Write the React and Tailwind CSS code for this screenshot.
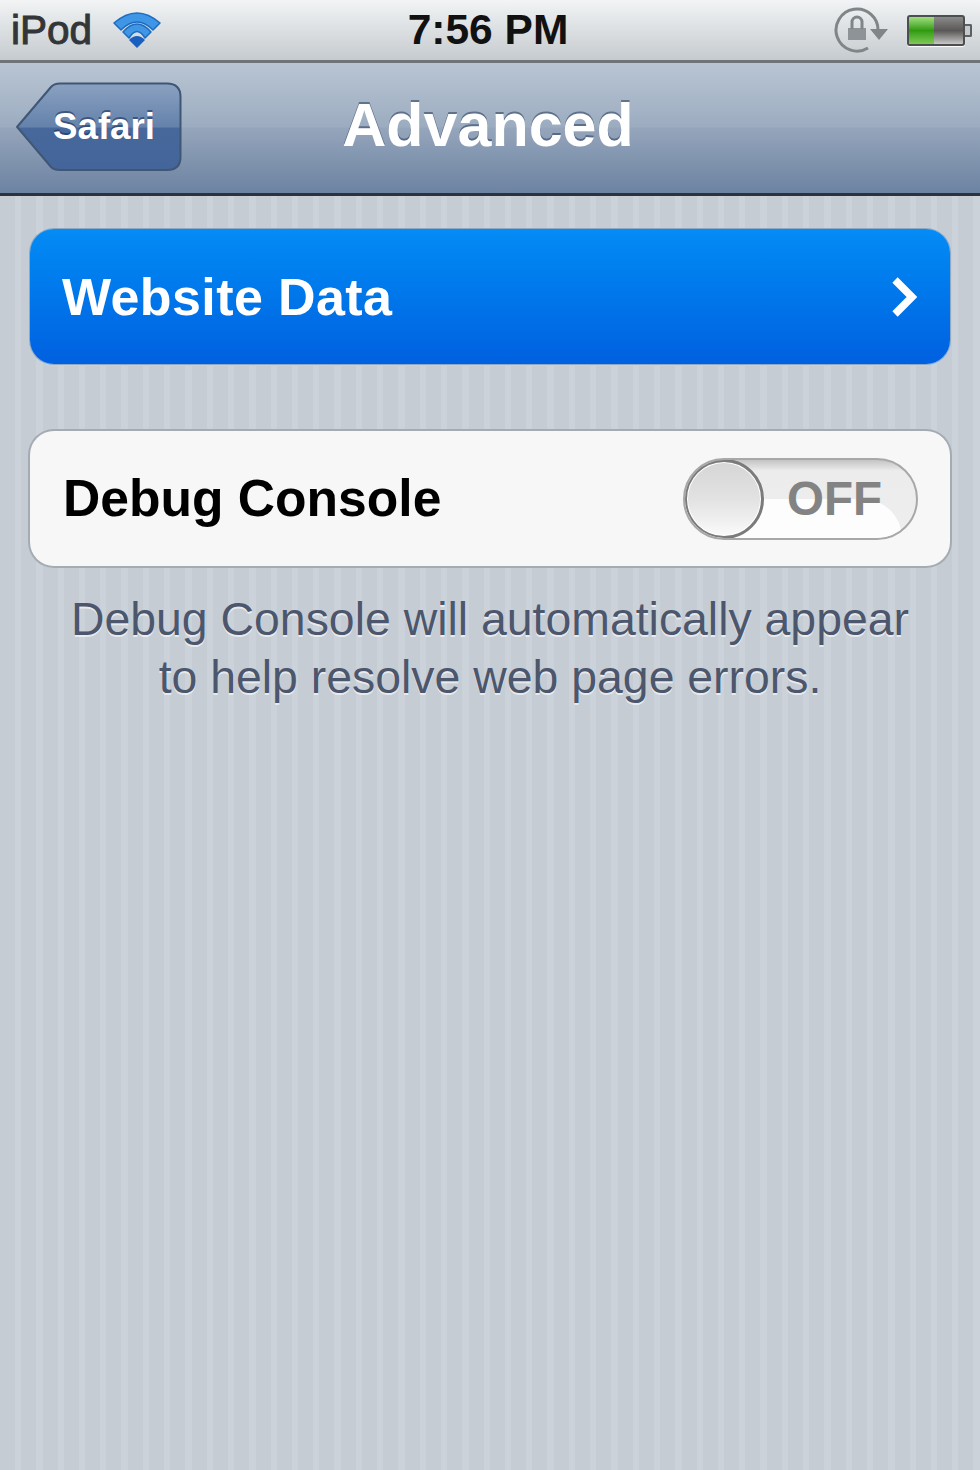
/**
 * iOS Settings - Safari Advanced page
 */

const WifiIcon = () => (
  <svg width="48" height="38" viewBox="0 0 48 38" fill="none">
    <path d="M1 12 Q24 -8 47 12 L40 19 Q24 3 8 19 Z" fill="#3f96e6" stroke="#1c6cc0" strokeWidth="1.5" strokeLinejoin="round" />
    <path d="M10 21 Q24 5 38 21 L32 27 Q24 14 16 27 Z" fill="#3f96e6" stroke="#1c6cc0" strokeWidth="1.5" strokeLinejoin="round" />
    <path d="M24 37 L16 29 Q24 21 32 29 Z" fill="#1a5fc0" />
  </svg>
);

const RotationLockIcon = () => (
  <svg width="54" height="50" viewBox="0 0 54 50" fill="none">
    <path d="M34 43 A21 21 0 1 1 44 26 L44 28" stroke="#808588" strokeWidth="3" />
    <path d="M36 24 H54 L45 35 Z" fill="#808588" />
    <rect x="14" y="23" width="18" height="12" fill="#8e9397" />
    <path d="M18 24 V17 a5 5 0 0 1 10 0 V24" stroke="#808588" strokeWidth="3" />
  </svg>
);

const BatteryIcon = () => (
  <div className="flex items-center">
    <div className="flex h-[31px] w-[58px] overflow-hidden rounded-[3px] border-2 border-[#4b4f52] bg-gradient-to-b from-[#8b8b8b] via-[#5a5856] to-[#c9c9c9] shadow-[0_1px_1px_#fff]">
      <div className="h-full w-[25px] bg-gradient-to-b from-[#9ee07a] via-[#2f9a0c] to-[#7ccb52]" />
    </div>
    <div className="h-[13px] w-[7px] rounded-r-[2px] border-2 border-l-0 border-[#5b6063] bg-[#c5c9cc]" />
  </div>
);

const BackButton = () => (
  <button className="relative flex h-[90px] w-[166px] items-center justify-end pr-[27px]">
    <svg className="absolute inset-0" width="166" height="90" viewBox="0 0 166 90" fill="none">
      <defs>
        <linearGradient id="backFill" x1="0" y1="0" x2="0" y2="1">
          <stop offset="0" stopColor="#8ba1c1" />
          <stop offset="0.5" stopColor="#6482ab" />
          <stop offset="0.52" stopColor="#46689b" />
          <stop offset="1" stopColor="#44659a" />
        </linearGradient>
      </defs>
      <path
        d="M1 45 L35 5 Q38 1.5 44 1.5 H151 Q164.5 1.5 164.5 15 V75 Q164.5 88 151 88 H44 Q38 88 35 85 Z"
        fill="url(#backFill)"
        stroke="#3f5675"
        strokeWidth="2"
      />
    </svg>
    <span className="relative text-[36.7px] font-bold leading-none text-white [text-shadow:0_-2px_0_rgba(30,50,90,0.6)]">
      Safari
    </span>
  </button>
);

const App = () => {
  return (
    <div className="flex h-[1470px] w-[980px] flex-col overflow-hidden font-['Liberation_Sans',Arial,sans-serif] bg-[repeating-linear-gradient(90deg,#c5ccd4_0px,#c5ccd4_15px,#cbd2da_15px,#cbd2da_21.3px)]">
      {/* Status bar */}
      <div className="grid h-[63px] shrink-0 grid-cols-[1fr_auto_1fr] items-center border-b-[3px] border-[#707478] bg-gradient-to-b from-[#f2f4f5] to-[#c6cbcf] pl-[11px] pr-[15px]">
        <div className="flex items-center gap-[21px]">
          <span className="text-[40.5px] leading-none text-[#333638] [-webkit-text-stroke:1px_#333638]">iPod</span>
          <WifiIcon />
        </div>
        <span className="text-[42.5px] font-bold leading-none text-[#111]">7:56 PM</span>
        <div className="-mr-[7px] flex items-center justify-end gap-[19px]">
          <RotationLockIcon />
          <BatteryIcon />
        </div>
      </div>

      {/* Navigation bar */}
      <div className="grid h-[133px] shrink-0 grid-cols-[1fr_auto_1fr] items-center border-b-[3px] border-[#2c333c] bg-[linear-gradient(180deg,#b9c5d3_0%,#9cacc0_49%,#95a5bb_50%,#6c83a2_100%)] pb-[2px] pl-[16px] pr-[20px]">
        <div>
          <BackButton />
        </div>
        <h1 className="mb-[4px] text-[61px] font-bold leading-none text-white [text-shadow:0_-2px_0_rgba(50,70,100,0.6)]">
          Advanced
        </h1>
        <div />
      </div>

      {/* Content */}
      <div className="flex flex-col px-[30px] pt-[33px]">
        <div className="flex h-[135px] items-center justify-between rounded-[24px] bg-gradient-to-b from-[#058cf5] to-[#0160e0] pl-[32px] pr-[30px] shadow-[0_0_0_1px_#8fa9c4,0_2px_0_#b8d4ef]">
          <span className="text-[52px] font-bold leading-none tracking-[0.4px] text-white">Website Data</span>
          <svg width="30" height="42" viewBox="0 0 30 42" fill="none">
            <path d="M5 4 L22 21 L5 38" stroke="#fff" strokeWidth="7.5" />
          </svg>
        </div>

        <div className="mt-[67px] flex h-[135px] items-center justify-between rounded-[24px] bg-[#f7f7f7] pl-[33px] pr-[32px] shadow-[0_0_0_2px_#a5abb3,0_2px_0_#dfe3e7]">
          <span className="text-[51.6px] font-bold leading-none text-black">Debug Console</span>
          {/* OFF switch */}
          <div className="relative flex h-[82px] w-[235px] items-center justify-end overflow-hidden rounded-full border-2 border-[#a8a8a8] bg-[linear-gradient(180deg,#c4c4c4_0%,#ececec_14%,#eeeeee_100%)] pr-[34px]">
            <div className="absolute bottom-0 left-0 right-[14px] top-1/2 rounded-tr-[44px] bg-[#fdfdfd]" />
            <span className="relative text-[47.5px] font-bold leading-none text-[#838383]">OFF</span>
            <div className="absolute left-[-1px] top-[-1px] size-[80px] rounded-full border-[3px] border-[#7b7b7b] bg-gradient-to-b from-[#d6d6d6] via-[#e2e2e2] to-[#fafafa] shadow-[inset_0_0_0_1px_#fff]" />
          </div>
        </div>

        <p className="mt-[24px] text-center text-[46.4px] leading-[58px] text-[#4c566c] [text-shadow:0_2px_0_rgba(255,255,255,0.6)]">
          Debug Console will automatically appear
          <br />
          to help resolve web page errors.
        </p>
      </div>
    </div>
  );
};

export default App;
